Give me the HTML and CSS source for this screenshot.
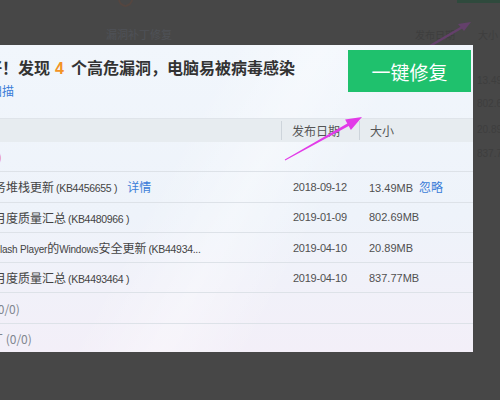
FILE: index.html
```html
<!DOCTYPE html>
<html lang="zh-CN">
<head>
<meta charset="utf-8">
<title>漏洞修复</title>
<link rel="stylesheet" href="styles.css">
</head>
<body>
<div class="behind">
  <svg class="b-shield" viewBox="0 0 18 18"><path d="M9 1 L16 4 V9 C16 13 13 16 9 17 C5 16 2 13 2 9 V4 Z" fill="none" stroke="#544640" stroke-width="2"/></svg>
  <span class="b-label">漏洞补丁修复</span>
  <span class="b-btn"></span>
  <span class="b-head b-date">发布日期</span>
  <span class="b-head b-size">大小</span>
  <span class="b-num n1">13.49MB</span>
  <span class="b-num n2">802.69MB</span>
  <span class="b-num n3">20.89MB</span>
  <span class="b-num n4">837.77MB</span>
  <svg class="b-arrow" viewBox="0 0 500 400"><path d="M430 46 L466 25" stroke="#64406b" stroke-width="2.5"/><path d="M471 22 L458 24 L464 31 Z" fill="#64406b"/></svg>
</div>

<div class="dialog">
  <div class="head">
    <div class="head-text">
      <div class="title">不好！发现<em>4</em>个高危漏洞，电脑易被病毒感染</div>
      <a class="rescan">重新扫描</a>
    </div>
    <button class="fix">一键修复</button>
  </div>
  <div class="table">
    <div class="thead">
      <div class="c name">补丁名称</div>
      <div class="c date">发布日期</div>
      <div class="c size">大小</div>
    </div>
    <div class="row group danger"><div class="c name">高危漏洞(4)</div></div>
    <div class="row item">
      <div class="c name">服务堆栈更新<span class="kb">(KB4456655 )</span><a class="link more">详情</a></div>
      <div class="c date">2018-09-12</div>
      <div class="c size">13.49MB<a class="link ignore">忽略</a></div>
    </div>
    <div class="row item">
      <div class="c name">的月度质量汇总<span class="kb">(KB4480966 )</span></div>
      <div class="c date">2019-01-09</div>
      <div class="c size">802.69MB</div>
    </div>
    <div class="row item">
      <div class="c name">于<span class="lat">Flash Player</span>的<span class="lat">Windows</span>安全更新<span class="kb">(KB44934...</span></div>
      <div class="c date">2019-04-10</div>
      <div class="c size">20.89MB</div>
    </div>
    <div class="row item">
      <div class="c name">的月度质量汇总<span class="kb">(KB4493464 )</span></div>
      <div class="c date">2019-04-10</div>
      <div class="c size">837.77MB</div>
    </div>
    <div class="row group"><div class="c name">功能更新 (0/0)</div></div>
    <div class="row group"><div class="c name">非必要补丁 (0/0)</div></div>
  </div>
</div>

<svg class="arrow" viewBox="0 0 500 400">
  <polygon points="284.8,159.6 347.3,123.5 345.1,119.5 362,117 350.9,130.1 348.7,126.1 285.2,160.4" fill="#e23be8"/>
</svg>
</body>
</html>
```

FILE: styles.css
```css
* { box-sizing: border-box; margin: 0; padding: 0; }
html, body { width: 500px; height: 400px; overflow: hidden; }
body {
  position: relative;
  background: #474747;
  font-family: "Liberation Sans", "Noto Sans CJK SC", sans-serif;
}

/* dimmed window behind the dialog */
.behind { position: absolute; inset: 0; }
.b-shield { position: absolute; left: 117px; top: -10px; width: 17px; height: 17px; }
.b-label { position: absolute; left: 106px; top: 26px; font-size: 11px; color: #4f5257; font-family: "Noto Sans CJK SC", sans-serif; }
.b-btn { position: absolute; left: 457px; top: -20px; width: 60px; height: 23px; background: #2f4a3d; }
.b-head { position: absolute; top: 27px; font-size: 10px; color: #3e3e3e; font-family: "Noto Sans CJK SC", sans-serif; }
.b-date { left: 415px; }
.b-size { left: 478px; }
.b-num { position: absolute; left: 477px; font-size: 10px; color: #3e3e3e; }
.n1 { top: 75px; }
.n2 { top: 98px; }
.n3 { top: 124px; }
.n4 { top: 148px; }
.b-arrow { position: absolute; left: 0; top: 0; width: 500px; height: 400px; }

/* dialog */
.dialog {
  position: absolute;
  left: -60px;
  top: 45px;
  width: 533px;
  height: 307px;
  overflow: hidden;
  background:
    linear-gradient(118deg, rgba(255,255,255,0) 42%, rgba(255,255,255,0.35) 55%, rgba(255,255,255,0) 68%),
    linear-gradient(180deg, #f1f6fc 0%, #eef3fa 55%, #f3eff8 100%);
}
.head {
  display: flex;
  justify-content: space-between;
  height: 73px;
  padding: 0 2px 0 30px;
}
.head-text { padding-top: 12px; }
.title {
  font-family: "Noto Sans CJK SC", sans-serif;
  font-size: 16px;
  font-weight: bold;
  line-height: 20px;
  color: #333;
  white-space: nowrap;
}
.title em {
  font-style: normal;
  font-family: "Liberation Sans", sans-serif;
  color: #f39325;
  margin: 0 7px 0 5px;
}
.rescan {
  display: block;
  margin: 4px 0 0 -4px;
  font-family: "Noto Sans CJK SC", sans-serif;
  font-size: 12px;
  line-height: 16px;
  color: #3b7dd8;
}
.fix {
  width: 123px;
  height: 42px;
  margin-top: 5px;
  border: none;
  background: #1fc16d;
  color: #fff;
  font-family: "Noto Sans CJK SC", sans-serif;
  font-size: 19px;
}

.table { border-top: 1px solid #dfe4ea; }
.thead, .row {
  display: grid;
  grid-template-columns: 341px 78px 114px;
  align-items: center;
  white-space: nowrap;
}
.thead {
  height: 23px;
  background: #e7ecf0;
  font-family: "Noto Sans CJK SC", sans-serif;
  font-size: 12px;
  color: #555;
}
.thead .name { padding-left: 5px; }
.thead .date, .thead .size {
  border-left: 1px solid #cdd4db;
  padding-left: 10px;
  line-height: 19px;
}
.row {
  height: 30.3px;
  border-bottom: 1px solid #dde2e8;
  font-size: 12px;
  color: #444;
}
.row .name { font-family: "Noto Sans CJK SC", sans-serif; }
.item .name { padding-left: 42px; }
.group .name { padding-left: 3px; color: #80868f; }
.danger .name { padding-left: 0; text-indent: -1px; color: #e88080; }
.lat { font-family: "Liberation Sans", sans-serif; font-size: 10px; letter-spacing: -0.2px; }
.kb { font-family: "Liberation Sans", sans-serif; font-size: 10.5px; letter-spacing: -0.3px; margin-left: 2px; }
.row .date { padding-left: 12px; font-size: 11px; letter-spacing: -0.25px; color: #505050; }
.row .size { padding-left: 10px; font-size: 11px; color: #505050; }
.link { color: #3b7dd8; font-family: "Noto Sans CJK SC", sans-serif; font-size: 12px; letter-spacing: 0; }
.more { margin-left: 10px; }
.ignore { margin-left: 6px; }

.arrow { position: absolute; left: 0; top: 0; width: 500px; height: 400px; pointer-events: none; }
```
